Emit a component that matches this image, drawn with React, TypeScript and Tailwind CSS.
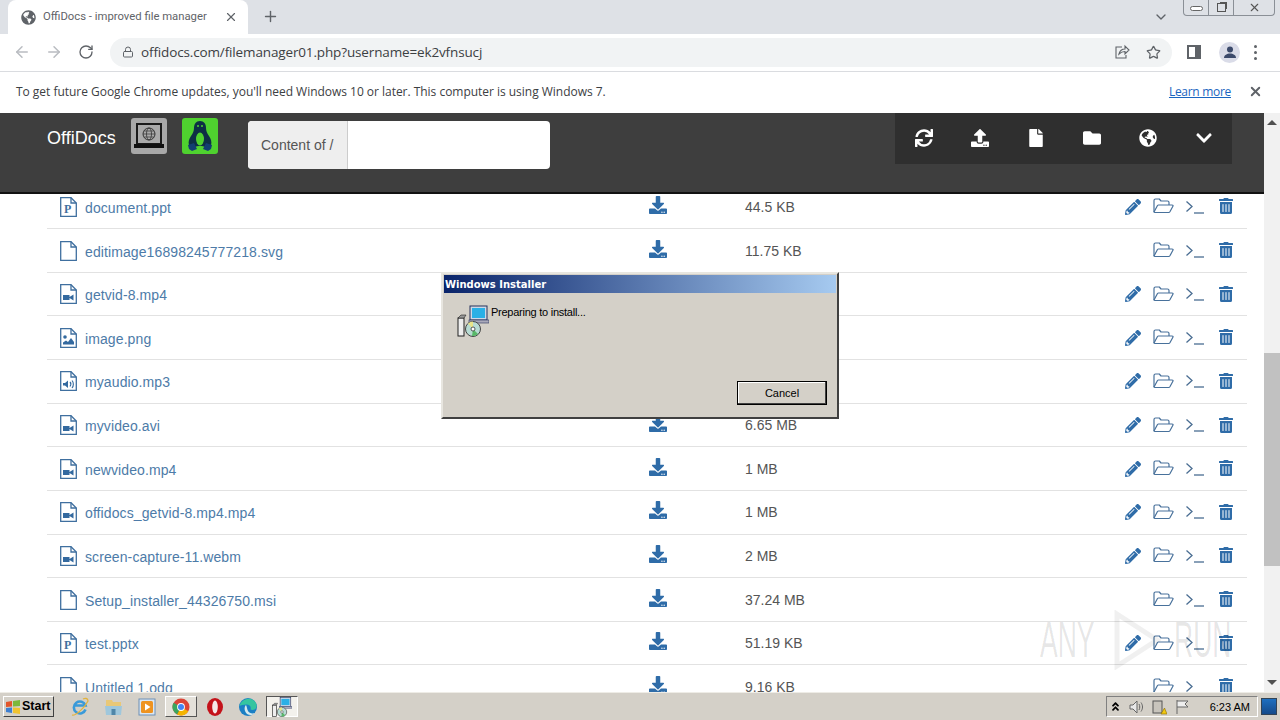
import React from 'react'
import {
  FaAngleDoubleUp,
  FaChevronDown,
  FaDownload,
  FaFile,
  FaFolder,
  FaGlobeAmericas,
  FaPencilAlt,
  FaSync,
  FaTrashAlt,
  FaUpload,
} from 'react-icons/fa'
import {
  LuArrowLeft,
  LuArrowRight,
  LuChevronDown,
  LuLock,
  LuPlus,
  LuRotateCw,
  LuStar,
  LuX,
} from 'react-icons/lu'

type Kind = 'ppt' | 'blank' | 'video' | 'image' | 'audio'

type Row = {
  name: string
  size: string
  kind: Kind
  edit: boolean
}

const rows: Row[] = [
  {name: 'document.ppt', size: '44.5 KB', kind: 'ppt', edit: true},
  {name: 'editimage16898245777218.svg', size: '11.75 KB', kind: 'blank', edit: false},
  {name: 'getvid-8.mp4', size: '', kind: 'video', edit: true},
  {name: 'image.png', size: '', kind: 'image', edit: true},
  {name: 'myaudio.mp3', size: '', kind: 'audio', edit: true},
  {name: 'myvideo.avi', size: '6.65 MB', kind: 'video', edit: true},
  {name: 'newvideo.mp4', size: '1 MB', kind: 'video', edit: true},
  {name: 'offidocs_getvid-8.mp4.mp4', size: '1 MB', kind: 'video', edit: true},
  {name: 'screen-capture-11.webm', size: '2 MB', kind: 'video', edit: true},
  {name: 'Setup_installer_44326750.msi', size: '37.24 MB', kind: 'blank', edit: false},
  {name: 'test.pptx', size: '51.19 KB', kind: 'ppt', edit: true},
  {name: 'Untitled 1.odg', size: '9.16 KB', kind: 'blank', edit: false},
]

const navIcons = [FaSync, FaUpload, FaFile, FaFolder, FaGlobeAmericas, FaChevronDown]

const FileIcon = ({kind}: {kind: Kind}) => (
  <svg width="17" height="20" viewBox="0 0 17 20" className="shrink-0">
    <path d="M.7.7h10.300l5.300 5.300v13.300H.7z" fill="#fff" stroke="#3f6f9f" strokeWidth="1.300" />
    <path d="M11 .7V6h5.300" fill="none" stroke="#3f6f9f" strokeWidth="1.300" />
    {kind === 'ppt' && (
      <text x="4" y="16" fontFamily="Liberation Serif, serif" fontWeight="700" fontSize="12" fill="#3f6f9f">
        P
      </text>
    )}
    {kind === 'video' && <path d="M3 11h6.500v2l4-2.500v6l-4-2.500v2H3z" fill="#33699f" />}
    {kind === 'image' && (
      <>
        <circle cx="5" cy="9" r="1.800" fill="#33699f" />
        <path d="M3 16.500v-2l3-2 2 1.500 3-4 3 4v2.500z" fill="#33699f" />
      </>
    )}
    {kind === 'audio' && (
      <>
        <path d="M3 12h2l3-2.500v7.500l-3-2.500H3z" fill="#33699f" />
        <path d="M10 11c1 1 1 3 0 4.500M12 9.500c1.800 2 1.800 5.500 0 7.500" fill="none" stroke="#33699f" strokeWidth="1.100" />
      </>
    )}
  </svg>
)

const FolderOpenIcon = () => (
  <svg width="21" height="16" viewBox="0 0 21 16" fill="none" stroke="#48719b" strokeWidth="1.200" strokeLinejoin="round" className="-mt-[1px]">
    <path d="M1 14V2.500A1.500 1.500 0 0 1 2.500 1h3.800l1.700 2h6.500A1.500 1.500 0 0 1 16 4.500V7" />
    <path d="M1 14 4.500 7.500A1.200 1.200 0 0 1 5.500 7H19c1 0 1.300.6.9 1.300l-3 5.500c-.3.5-.7.7-1.200.7H2c-.6 0-1-.2-1-.5z" />
  </svg>
)

const TerminalIcon = () => (
  <svg width="20" height="14" viewBox="0 0 20 14" fill="none" stroke="#4a6d92" strokeWidth="1.300">
    <path d="M1.500 1.500 7 6.500 1.500 11.500" />
    <path d="M9 13h10" />
  </svg>
)

const LaptopIcon = () => (
  <svg width="32" height="28" viewBox="0 0 32 28">
    <rect x="4" y="2" width="24" height="20" fill="#aaa" stroke="#1a1a1a" strokeWidth="2" />
    <circle cx="16" cy="12" r="6" fill="none" stroke="#333" strokeWidth="1" />
    <ellipse cx="16" cy="12" rx="2.500" ry="6" fill="none" stroke="#333" strokeWidth="0.800" />
    <path d="M10 12h12M11 9h10M11 15h10" stroke="#333" strokeWidth="0.700" />
    <rect x="1" y="22" width="30" height="4" fill="#111" />
  </svg>
)

const PenguinIcon = () => (
  <svg width="32" height="32" viewBox="0 0 32 32">
    <path d="M16 1c-4 0-6 3-6 7 0 3-1 5-3 8-2 3-3 6-2 9l5 3c2-2 4-2 6-2s4 0 6 2l5-3c1-3 0-6-2-9-2-3-3-5-3-8 0-4-2-7-6-7z" fill="#0d2f45" />
    <ellipse cx="16" cy="19" rx="4" ry="6.500" fill="#4fd22f" />
    <circle cx="14" cy="6" r="1" fill="#4fd22f" />
    <circle cx="18" cy="6" r="1" fill="#4fd22f" />
    <path d="M4 25l6-2 3 6-5 2-3-2zM28 25l-6-2-3 6 5 2 3-2z" fill="#123e72" />
  </svg>
)

const InstallerIcon = ({size = 32}: {size?: number}) => (
  <svg width={size} height={size} viewBox="0 0 32 32">
    <rect x="1" y="13" width="6" height="18" fill="#eee" stroke="#222" />
    <path d="M1 13l3-3h5l-2 3z" fill="#999" stroke="#222" strokeWidth="0.600" />
    <rect x="13" y="1" width="17" height="14" fill="#cfd8e6" stroke="#26305a" />
    <rect x="15" y="3" width="13" height="10" fill="#2ab0e6" />
    <rect x="12" y="15" width="20" height="3" fill="#aab" stroke="#26305a" strokeWidth="0.600" />
    <circle cx="16" cy="24" r="7.500" fill="#b8dcd4" stroke="#444" />
    <path d="M16 24 11 18.500a7 7 0 0 1 5-2z" fill="#e9e58a" />
    <path d="M16 24 21 29a7 7 0 0 1-6 2z" fill="#58b868" />
    <circle cx="16" cy="24" r="2" fill="#fff" stroke="#333" strokeWidth="0.800" />
  </svg>
)

const taskbarSlots: {pressed?: boolean; raised?: boolean; icon: React.ReactNode}[] = [
  {
    icon: (
      <svg width="20" height="20" viewBox="0 0 20 20" fill="none">
        <path d="M15.500 12.500a6 6 0 1 1 0-4H5" stroke="#3a9ad9" strokeWidth="2.600" />
        <path d="M2 18c3 1 12-6 16-14 0-3-3-3-5-2" stroke="#e2b33c" strokeWidth="1.300" />
      </svg>
    ),
  },
  {
    icon: (
      <svg width="19" height="18" viewBox="0 0 19 18">
        <path d="M2 2h6l1 2h8v5H2z" fill="#e9c877" />
        <path d="M1 8h17l-1 9H2z" fill="#9fc7dc" />
        <rect x="7.500" y="11" width="4" height="6" fill="#4f86a8" />
      </svg>
    ),
  },
  {
    icon: (
      <svg width="18" height="18" viewBox="0 0 18 18">
        <rect x="1" y="1" width="16" height="16" fill="#dbe7f3" stroke="#6d8fb5" />
        <rect x="3" y="3" width="12" height="12" rx="1.500" fill="#ee9320" />
        <path d="M7 5.500 12.500 9 7 12.500z" fill="#fff" />
      </svg>
    ),
  },
  {
    raised: true,
    icon: (
      <svg width="18" height="18" viewBox="0 0 18 18">
        <circle cx="9" cy="9" r="8.500" fill="#db4437" />
        <path d="M9 9 16.400 13.300A8.500 8.500 0 0 1 5 16.500z" fill="#f4b400" />
        <path d="M9 9 1.600 4.700A8.500 8.500 0 0 0 5 16.500L9 9z" fill="#3ba55d" />
        <circle cx="9" cy="9" r="3.900" fill="#fff" />
        <circle cx="9" cy="9" r="3" fill="#4285f4" />
      </svg>
    ),
  },
  {
    icon: (
      <svg width="18" height="20" viewBox="0 0 18 20">
        <ellipse cx="9" cy="10" rx="8" ry="9" fill="#c4121a" />
        <ellipse cx="9" cy="10" rx="2.800" ry="6.500" fill="#f5e8e8" />
      </svg>
    ),
  },
  {
    icon: (
      <svg width="20" height="20" viewBox="0 0 20 20">
        <circle cx="10" cy="10" r="9" fill="#1b7fc4" />
        <path d="M1.500 9C3 3 9 1 13 2c4 1 6 5 5.500 8-.5 3-4 3.500-6 2.500 1-3-1-5-4-5-3 0-6 1-7 1.500z" fill="#35c5a0" />
        <path d="M8 8c-2 2-2 6 1 9 3 2 6 1 8-1-3 1-6 0-7-2-1-2-1-4-2-6z" fill="#d5e9ee" />
      </svg>
    ),
  },
  {pressed: true, icon: <InstallerIcon size={20} />},
]

const App = () => {
  return (
    <div className="relative flex h-[720px] w-[1280px] flex-col overflow-hidden bg-white font-['Liberation_Sans',sans-serif]">
      {/* tab strip */}
      <div className="relative flex h-[34px] shrink-0 items-end bg-[#dee1e6] pl-[8px]">
        <div className="flex h-[34px] w-[240px] items-center rounded-t-lg bg-white pl-[13px] pr-[10px]">
          <FaGlobeAmericas size={15} className="text-[#5f6368]" />
          <span className="ml-[7px] flex-1 truncate font-['Roboto',sans-serif] text-[11.300px] text-[#5f6368]">
            OffiDocs - improved file manager
          </span>
          <LuX size={14} className="text-[#5f6368]" />
        </div>
        <LuPlus size={17} className="mb-[9px] ml-[14px] text-[#5f6368]" />
        <LuChevronDown size={16} className="absolute right-[111px] top-[9px] text-[#5f6368]" />
        <div className="absolute right-[5px] top-0 flex h-[16px] w-[92px] rounded-b-[4px] border border-t-0 border-[#8a8f96] text-[#555]">
          <div className="flex w-[25px] items-center justify-center border-r border-[#8a8f96]">
            <div className="mt-[2px] h-[5px] w-[13px] rounded-sm border border-[#666] bg-white" />
          </div>
          <div className="flex w-[25px] items-center justify-center border-r border-[#8a8f96]">
            <div className="h-[9px] w-[9px] border border-[#555] shadow-[2px_-2px_0_-1px_#555]" />
          </div>
          <div className="flex flex-1 items-center justify-center">
            <LuX size={13} />
          </div>
        </div>
      </div>

      {/* toolbar */}
      <div className="flex h-[38px] shrink-0 items-center border-b border-[#dadce0] bg-white pb-[1px]">
        <LuArrowLeft size={18} className="ml-[13px] text-[#b9bcc1]" />
        <LuArrowRight size={18} className="ml-[14px] text-[#b9bcc1]" />
        <LuRotateCw size={16} className="ml-[15px] text-[#5f6368]" />
        <div className="ml-[16px] flex h-[29px] w-[1062px] items-center rounded-full bg-[#f1f3f4] pl-[12px] pr-[10px]">
          <LuLock size={12} className="text-[#5f6368]" />
          <span className="ml-[7px] flex-1 font-['Open_Sans',sans-serif] text-[13.500px] tracking-[-0.140px] text-[#3c4043]">
            offidocs.com/filemanager01.php?username=ek2vfnsucj
          </span>
          <svg width="16" height="16" viewBox="0 0 16 16" fill="none" stroke="#5f6368" strokeWidth="1.100" className="mr-[16px]">
            <path d="M8 3H2v11h10v-3" />
            <path d="M5 10c1-4 4-5 6-5V2l4 4-4 4V7.500c-2 0-4 .5-6 2.500z" />
          </svg>
          <LuStar size={15} className="mr-[1px] text-[#5f6368]" />
        </div>
        <div className="ml-[15px] h-[14px] w-[14px] border-2 border-[#5f6368] bg-[linear-gradient(90deg,#fff_55%,#5f6368_55%)]" />
        <div className="ml-[18px] flex h-[21px] w-[21px] items-center justify-center overflow-hidden rounded-full bg-[#dadce8]">
          <svg width="14" height="14" viewBox="0 0 14 14" fill="#3c4a6b">
            <circle cx="7" cy="4.500" r="3" />
            <path d="M1 13c0-3 3-4.500 6-4.500s6 1.500 6 4.500z" />
          </svg>
        </div>
        <div className="ml-[14px] flex flex-col gap-[3px]">
          <div className="h-[3px] w-[3px] rounded-full bg-[#5f6368]" />
          <div className="h-[3px] w-[3px] rounded-full bg-[#5f6368]" />
          <div className="h-[3px] w-[3px] rounded-full bg-[#5f6368]" />
        </div>
      </div>

      {/* infobar */}
      <div className="flex h-[41px] shrink-0 items-center bg-white pb-[2px] pl-[16px] pr-[17px] font-['Open_Sans',sans-serif] text-[12px] text-[#3c4043]">
        <span className="flex-1 tracking-[-0.025px]">
          To get future Google Chrome updates, you&apos;ll need Windows 10 or later. This computer is using Windows 7.
        </span>
        <a className="mr-[17px] tracking-[-0.300px] text-[#1a65c0] underline">Learn more</a>
        <LuX size={15} className="text-[#5f6368]" strokeWidth={3} />
      </div>

      {/* page */}
      <div className="relative flex min-h-0 flex-1">
        <div className="flex min-w-0 flex-1 flex-col">
          <nav className="relative z-10 flex h-[81px] shrink-0 items-start border-b-2 border-[#111] bg-[#3e3e3e]">
            <span className="ml-[47px] mt-[12px] text-[18px] text-white">OffiDocs</span>
            <div className="ml-[15px] mt-[5px] flex h-[36px] w-[36px] items-center justify-center rounded-[3px] bg-[#a8a8a8]">
              <LaptopIcon />
            </div>
            <div className="ml-[15px] mt-[5px] flex h-[36px] w-[36px] items-center justify-center rounded-[3px] bg-[#4fd22f]">
              <PenguinIcon />
            </div>
            <div className="ml-[30px] mt-[8px] flex h-[48px] w-[302px] overflow-hidden rounded bg-white text-[14px] text-[#555]">
              <div className="flex w-[100px] items-center justify-center border-r border-[#ccc] bg-[#eee]">Content of /</div>
            </div>
            <div className="ml-auto mr-[32px] flex h-[51px] w-[337px] items-center bg-[#2f2f2f] pb-[2px] pl-[1px] text-white">
              {navIcons.map((Icon, i) => (
                <div key={i} className="flex w-[56px] items-center justify-center">
                  <Icon size={18} />
                </div>
              ))}
            </div>
          </nav>

          <div className="min-h-0 flex-1 overflow-hidden">
            <div className="ml-[47px] mr-[17px] -mt-[8.400px]">
              {rows.map((r) => (
                <div key={r.name} className="flex h-[43.630px] items-center border-b border-[#e2e2e2] pl-[13px] pr-[6px] text-[14px] text-[#337ab7]">
                  <div className="flex w-[589px] items-center">
                    <FileIcon kind={r.kind} />
                    <span className="ml-[8px] mt-[3px] tracking-[0.100px] text-[#4d7ba8]">{r.name}</span>
                  </div>
                  <FaDownload size={18} className="-mt-[4px] text-[#2f6ca8]" />
                  <span className="ml-[78px] mt-[1px] flex-1 text-[#555]">{r.size}</span>
                  <div className="flex w-[31px] justify-center">
                    {r.edit && <FaPencilAlt size={16} className="text-[#2f6ca8]" />}
                  </div>
                  <div className="flex w-[31px] justify-center">
                    <FolderOpenIcon />
                  </div>
                  <div className="flex w-[31px] justify-center">
                    <TerminalIcon />
                  </div>
                  <div className="flex w-[31px] justify-center">
                    <FaTrashAlt size={16} className="-mt-[1px] text-[#2f6ca8]" />
                  </div>
                </div>
              ))}
            </div>
          </div>
        </div>

        {/* scrollbar */}
        <div className="flex w-[16px] shrink-0 flex-col items-center bg-[#f1f1f1]">
          <div className="mt-[7px] h-0 w-0 border-x-[5px] border-b-[5px] border-x-transparent border-b-[#505050]" />
          <div className="mt-[228px] h-[213px] w-full bg-[#c1c1c1]" />
          <div className="mb-[7px] mt-auto h-0 w-0 border-x-[5px] border-t-[5px] border-x-transparent border-t-[#505050]" />
        </div>

        {/* watermark */}
        <div className="pointer-events-none absolute left-[1040px] top-[497px] z-20 flex items-center text-[50px] leading-none text-black/10">
          <span className="inline-block w-[60px] origin-left scale-x-[0.53] whitespace-nowrap">ANY</span>
          <svg width="48" height="60" viewBox="0 0 48 60" fill="none" stroke="#000" strokeOpacity="0.06" strokeWidth="5" className="ml-[13px]">
            <path d="M4 4 44 30 4 56z" />
          </svg>
          <span className="ml-[13px] inline-block w-[60px] origin-left scale-x-[0.53] whitespace-nowrap">RUN</span>
        </div>

        {/* installer dialog */}
        <div className="absolute left-[441px] top-[159px] z-30 flex h-[147px] w-[398px] flex-col border-2 border-t-[#e8e6e0] border-l-[#e8e6e0] border-r-[#404040] border-b-[#404040] bg-[#d4d0c8] p-[1px]">
          <div className="flex h-[18px] shrink-0 items-center bg-[linear-gradient(90deg,#0a246a,#a6caf0)] pl-[1px] font-['DejaVu_Sans',sans-serif] text-[10px] font-bold text-white">
            Windows Installer
          </div>
          <div className="flex flex-1 flex-col px-[13px] pt-[12px]">
            <div className="flex items-start">
              <InstallerIcon />
              <span className="ml-[2px] -mt-[1px] text-[11px] tracking-[-0.250px] text-black">Preparing to install...</span>
            </div>
            <button
              type="button"
              className="mb-[11px] mr-[-4px] mt-auto h-[24px] w-[90px] self-end border border-black bg-[#d4d0c8] text-[11px] text-black shadow-[inset_-1px_-1px_0_#404040,inset_1px_1px_0_#fff]"
            >
              Cancel
            </button>
          </div>
        </div>
      </div>

      {/* taskbar */}
      <div className="relative z-30 flex h-[28px] shrink-0 items-center border-t border-[#eeece6] bg-[#d4d0c8] pl-[3px] text-[11px] text-black">
        <div className="flex h-[21px] w-[51px] items-center gap-[1px] border border-t-white border-l-white border-r-[#404040] border-b-[#404040] pl-[1px] text-[12.500px] font-bold">
          <svg width="16" height="14" viewBox="0 0 16 14" className="shrink-0">
            <path d="M1 2 7 1v5.500L1 7z" fill="#e2562b" />
            <path d="M8 1l7-1v6L8 6.500z" fill="#7cb83c" />
            <path d="M1 8l6-.5V13l-6-1z" fill="#3d7fd1" />
            <path d="M8 7.500l7 .5v6l-7-1z" fill="#f0c330" />
          </svg>
          Start
        </div>
        <div className="ml-[9px] flex items-center">
          {taskbarSlots.map((s, i) => (
            <div key={i} className="flex h-[21px] w-[33.700px] items-center justify-center">
              {s.raised || s.pressed ? (
                <div
                  className={
                    s.raised
                      ? 'flex h-[21px] w-[32px] items-center justify-center border border-t-white border-l-white border-r-[#555] border-b-[#555] bg-[#e4e1da]'
                      : 'flex h-[21px] w-[32px] items-center justify-center border border-t-[#555] border-l-[#555] border-r-white border-b-white bg-[#f3f1ec]'
                  }
                >
                  {s.icon}
                </div>
              ) : (
                s.icon
              )}
            </div>
          ))}
        </div>
        <div className="ml-auto flex h-[21px] w-[152px] items-center border border-t-[#808080] border-l-[#808080] border-r-white border-b-white pl-[3px]">
          <FaAngleDoubleUp size={11} />
          <svg width="16" height="16" viewBox="0 0 16 16" fill="#e8e8e8" stroke="#666" className="ml-[7px]">
            <path d="M2 6h3l4-4v12l-4-4H2z" />
            <path d="M11 5c1 2 1 4 0 6M13 3.500c2 3 2 6 0 9" fill="none" />
          </svg>
          <svg width="16" height="16" viewBox="0 0 16 16" className="ml-[7px]">
            <rect x="2" y="2" width="9" height="12" fill="#c8c4bc" stroke="#555" />
            <path d="M10 15l3.500-6 2.500 6z" fill="#f2c811" stroke="#8a6d00" strokeWidth="0.600" />
          </svg>
          <svg width="16" height="16" viewBox="0 0 16 16" fill="#eee" stroke="#666" className="ml-[7px]">
            <path d="M3 1v14M3 2h11l-3 3 3 3H3" />
          </svg>
          <span className="ml-auto mr-[7px] mt-[1px] text-[11px]">6:23 AM</span>
        </div>
        <div className="ml-[3px] mr-[3px] h-[17px] w-[16px] border border-[#345] bg-[linear-gradient(180deg,#1e6fc0,#154a8a)]" />
      </div>
    </div>
  )
}

export default App
